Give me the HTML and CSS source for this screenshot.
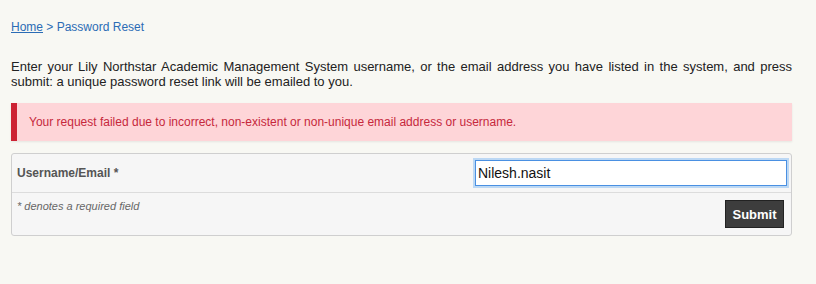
FILE: index.html
```html
<!DOCTYPE html>
<html lang="en">
<head>
  <meta charset="UTF-8" />
  <title>Password Reset</title>
  <link rel="stylesheet" href="styles.css">
</head>
<body>
    <div class="breadcrumb">
        <a href="#">Home</a> &gt; Password Reset
    </div>

    <p class="intro">
        Enter your Lily Northstar Academic Management System username, or the email address you have listed in the system, and press submit: a unique password reset link will be emailed to you.
    </p>

    <div class="alert">
        Your request failed due to incorrect, non-existent or non-unique email address or username.
    </div>

    <form class="reset-form" onsubmit="return false;">
        <div class="form-row">
            <label for="username">Username/Email *</label>
            <div class="field">
                <input type="text" id="username" value="Nilesh.nasit" autofocus>
            </div>
        </div>
        <div class="form-row form-footer">
            <span class="note">* denotes a required field</span>
            <button type="submit" class="submit-btn">Submit</button>
        </div>
    </form>
</body>
</html>
```

FILE: styles.css
```css
* {
    margin: 0;
    padding: 0;
    box-sizing: border-box;
}

body {
    background-color: #f8f8f3;
    font-family: "Liberation Sans", Arial, sans-serif;
    color: #222;
    padding: 20px 24px 0 11px;
}

/* Breadcrumb */
.breadcrumb {
    font-size: 12px;
    line-height: 14px;
    color: #2b6cb5;
}

.breadcrumb a {
    color: #2b6cb5;
    text-decoration: underline;
}

.intro {
    margin-top: 25px;
    font-size: 13px;
    line-height: 15px;
    text-align: justify;
    color: #222;
}

/* Error box */
.alert {
    margin-top: 14px;
    background-color: #fed5d8;
    border-left: 6px solid #cc2233;
    color: #c6283c;
    font-size: 12px;
    padding: 12px;
    height: 38px;
    line-height: 14px;
    box-shadow: 0 1px 2px rgba(0, 0, 0, 0.08);
}

/* Form */
.reset-form {
    margin-top: 12px;
    background-color: #f6f6f6;
    border: 1px solid #cfcfcf;
    border-radius: 3px;
}

.form-row {
    display: grid;
    grid-template-columns: 456px 1fr;
    align-items: center;
    height: 39px;
    padding: 0 2px 0 5px;
    border-bottom: 1px solid #dcdcdc;
}

.form-row label {
    font-size: 12px;
    font-weight: bold;
    color: #555;
}

.field {
    padding: 2px;
    background: #bcd8f4;
}

.field input {
    display: block;
    width: 100%;
    height: 26px;
    border: 1px solid #4a90e2;
    padding: 0 2px;
    font-family: "Liberation Sans", Arial, sans-serif;
    font-size: 14px;
    color: #111;
    background: #fff;
    outline: none;
}

.form-footer {
    display: flex;
    justify-content: space-between;
    align-items: flex-start;
    height: 42px;
    border-bottom: none;
    padding: 7px 7px 0 5px;
}

.note {
    font-size: 11px;
    font-style: italic;
    color: #666;
}

.submit-btn {
    background-color: #3d3d3d;
    color: #fff;
    border: 1px solid #222;
    font-family: "Liberation Sans", Arial, sans-serif;
    font-weight: bold;
    font-size: 13px;
    height: 28px;
    width: 59px;
    cursor: pointer;
}
```
